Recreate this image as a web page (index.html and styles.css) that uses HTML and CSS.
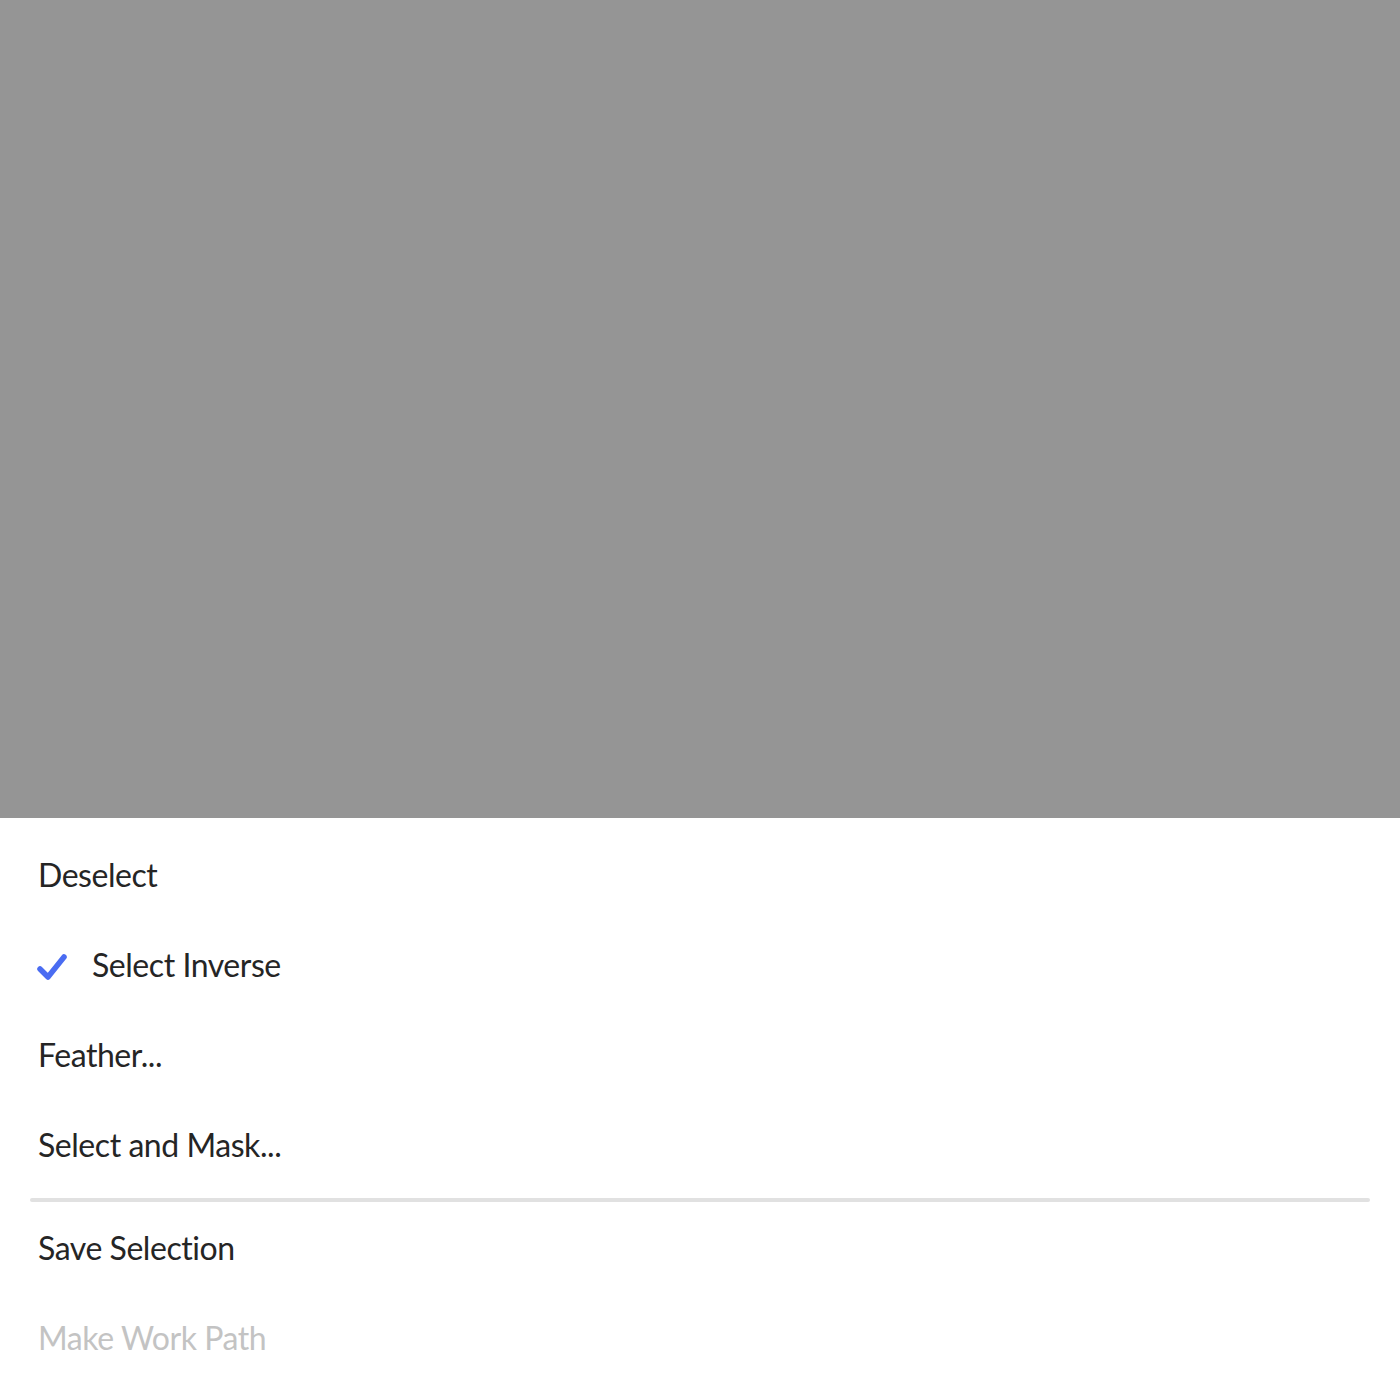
FILE: index.html
```html
<!DOCTYPE html>
<html lang="en">
<head>
<meta charset="utf-8">
<title>Menu</title>
<link rel="stylesheet" href="styles.css">
</head>
<body>
<div class="app">
  <div class="overlay"></div>
  <div class="menu">
    <div class="item"><span class="label">Deselect</span></div>
    <div class="item checked">
      <svg class="check" width="30" height="28" viewBox="0 0 30 28"><path d="M3 16 L11 24 L27 4" fill="none" stroke="#4a6cf2" stroke-width="5.5" stroke-linecap="round" stroke-linejoin="round"/></svg>
      <span class="label">Select Inverse</span>
    </div>
    <div class="item"><span class="label">Feather...</span></div>
    <div class="item"><span class="label">Select and Mask...</span></div>
    <div class="divider"></div>
    <div class="item"><span class="label">Save Selection</span></div>
    <div class="item disabled"><span class="label">Make Work Path</span></div>
  </div>
</div>
</body>
</html>
```
FILE: styles.css
```css
html, body {
  margin: 0;
  padding: 0;
  background: #ffffff;
}
.app {
  width: 1400px;
  height: 1374px;
  display: flex;
  flex-direction: column;
  overflow: hidden;
  font-family: Lato, "Open Sans", sans-serif;
}
.overlay {
  height: 818px;
  flex: none;
  background: #959595;
}
.menu {
  flex: 1;
  background: #ffffff;
  padding-top: 12px;
  display: flex;
  flex-direction: column;
}
.item {
  height: 90px;
  flex: none;
  display: flex;
  align-items: center;
  padding-left: 38px;
  font-size: 32px;
  letter-spacing: -0.45px;
  color: #252525;
  line-height: 90px;
}
.item.checked {
  padding-left: 37px;
}
.check {
  margin-right: 25px;
  margin-top: 4px;
}
.item.disabled {
  color: #c3c3c3;
}
.divider {
  height: 4px;
  flex: none;
  margin: 8px 30px 1px 30px;
  background: #e1e1e1;
  border-radius: 2px;
}
```
